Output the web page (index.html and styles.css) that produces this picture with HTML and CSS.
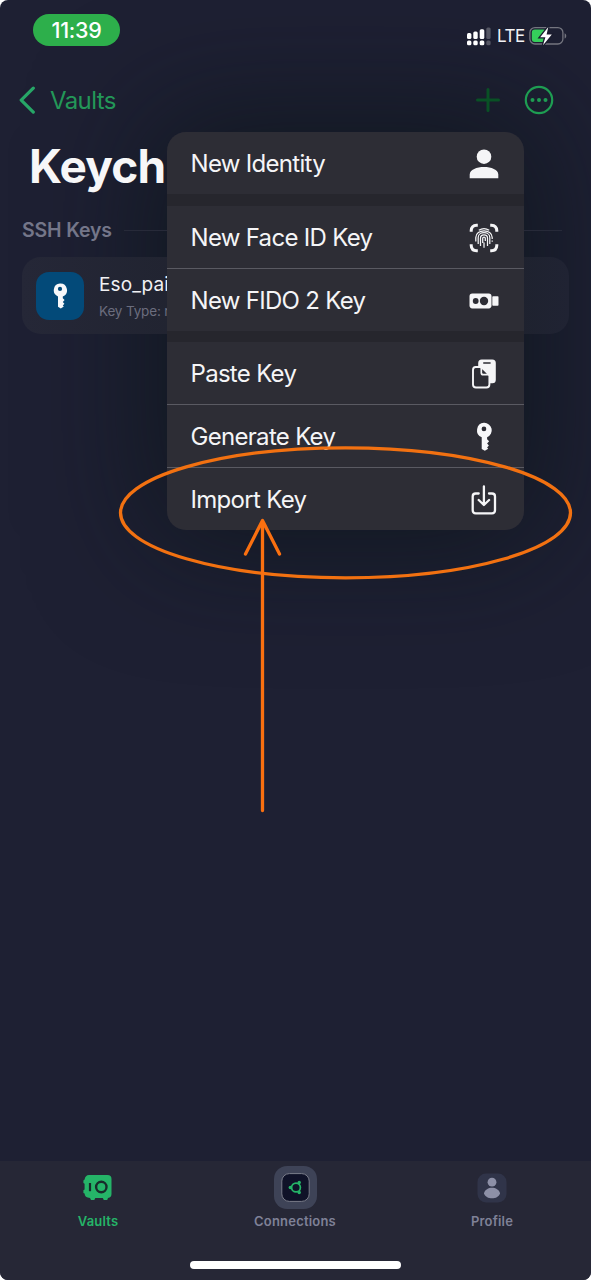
FILE: index.html
```
<!DOCTYPE html>
<html lang="en">
<head>
<meta charset="utf-8">
<title>Keychain</title>
<link rel="stylesheet" href="styles.css">
</head>
<body>
<div class="phone">
  <i class="menu-shadow"></i>
  <header class="status">
    <span class="clock">11:39</span>
    <div class="status-right">
      <svg class="signal" width="24" height="19" viewBox="0 0 24 19" fill="#fff">
        <rect x="0" y="6" width="4.4" height="6" rx="1.5"/><rect x="6.3" y="4.5" width="4.4" height="7.5" rx="1.5"/><rect x="12.7" y="2.2" width="4.6" height="9.8" rx="1.5"/><rect x="19.3" y="0.5" width="4.3" height="11.5" rx="1.5" opacity=".25"/>
        <rect x="0" y="13.6" width="4.4" height="4.6" rx="1.5"/><rect x="6.3" y="13.6" width="4.4" height="4.6" rx="1.5"/><rect x="12.7" y="13.6" width="4.6" height="4.6" rx="1.5"/><rect x="19.3" y="13.6" width="4.3" height="4.6" rx="1.5" opacity=".25"/>
      </svg>
      <span class="lte">LTE</span>
      <svg class="battery" width="39" height="20" viewBox="0 0 39 20">
        <rect x=".9" y="1.6" width="33" height="16.4" rx="5" fill="none" stroke="#74757f" stroke-width="1.3"/>
        <path d="M35.6 7.2c2.2.7 2.2 4.600 0 5.400z" fill="#74757f"/>
        <rect x="2.800" y="3.500" width="14.500" height="12.600" rx="3" fill="#35ce5b"/>
        <path d="M19.300 1L11.200 11.200h5.200l-2.400 8L22.800 8.600h-5.200z" fill="#fff" stroke="#1b1d2f" stroke-width="2.600" paint-order="stroke"/>
      </svg>
    </div>
  </header>
  <nav class="navbar">
    <svg width="18" height="28" viewBox="0 0 18 28" fill="none" stroke="#27a667" stroke-width="3.200" stroke-linecap="round" stroke-linejoin="round"><path d="M14.300 2.200L2.200 14.100l12.100 12"/></svg>
    <span class="back">Vaults</span>
    <svg class="plus" width="24" height="24" viewBox="0 0 24 24" stroke="#095125" stroke-width="3" stroke-linecap="round"><path d="M12 1.500v21M1.500 12h21"/></svg>
    <svg class="more" width="30" height="30" viewBox="0 0 30 30"><circle cx="15" cy="15" r="13.200" fill="none" stroke="#1e9d52" stroke-width="2.200"/><g fill="#1e9d52"><circle cx="8.500" cy="15" r="2"/><circle cx="15" cy="15" r="2"/><circle cx="21.500" cy="15" r="2"/></g></svg>
  </nav>
  <main class="content">
    <h1 class="title">Keych</h1>
    <div class="section"><h2 class="section-name">SSH Keys</h2><i class="rule"></i></div>
    <div class="card">
      <div class="tile"><svg width="16" height="26" viewBox="0 0 16 26"><use href="#key"/></svg></div>
      <div class="info"><span class="name">Eso_pai</span><span class="kind">Key Type: r</span></div>
    </div>
  </main>
  <footer class="tabs">
    <div class="tab tab-on">
      <div class="tab-icon">
        <svg width="30" height="28" viewBox="0 0 30 28"><path d="M6 1h18.500q4 0 4 4v15q0 3.600-3.500 4l-.8 2h-3.400l-1-2H12.300l-1 2H8l-1-2Q1.600 23.500 1.600 19.500l-1.200-.6v-2.600l1.200-.8V9.700L.4 9V6.400L1.600 5.600Q2.300 1 6 1z" fill="#25b468"/><path d="M7 9v8.200" stroke="#182c2b" stroke-width="2.200"/><circle cx="18.300" cy="13" r="5.200" fill="none" stroke="#182c2b" stroke-width="2.400"/></svg>
      </div>
      <span>Vaults</span>
    </div>
    <div class="tab">
      <div class="tab-icon">
        <svg width="43" height="43" viewBox="0 0 43 43"><rect width="43" height="43" rx="13" fill="#3e4357"/><rect x="7.800" y="7.600" width="27.400" height="27.800" rx="7.500" fill="#0f1228" stroke="#7a7d8a" stroke-width="1"/><circle cx="22" cy="21.500" r="4.400" fill="none" stroke="#25b468" stroke-width="1.700"/><g fill="#25b468"><circle cx="16.300" cy="21.500" r="1.700"/><circle cx="25.200" cy="16.500" r="1.700"/><circle cx="25.200" cy="26.500" r="1.700"/></g></svg>
      </div>
      <span>Connections</span>
    </div>
    <div class="tab">
      <div class="tab-icon">
        <svg width="30" height="30" viewBox="0 0 30 30"><rect x=".5" y=".5" width="29" height="29" rx="8.500" fill="#303449"/><circle cx="15" cy="9.200" r="4.400" fill="#8d90a7"/><path d="M7 20.200c1.700-7.400 14.300-7.400 16 0-1.500 6.800-14.500 6.800-16 0z" fill="#8d90a7"/></svg>
      </div>
      <span>Profile</span>
    </div>
    <i class="home"></i>
  </footer>

  <div class="menu">
    <div class="item"><span>New Identity</span>
      <svg width="30" height="30" viewBox="0 0 30 30" fill="#f5f5f7"><circle cx="15" cy="7.700" r="7.300"/><path d="M.7 29.200v-3.700C.7 15.500 29.300 15.500 29.300 25.500v3.700z"/></svg></div>
    <div class="gap gap-a"></div>
    <div class="item item-line"><span>New Face ID Key</span>
      <svg width="30" height="30" viewBox="0 0 30 30" fill="none" stroke="#f5f5f7"><path d="M2.200 8.800V7.600Q2.400 2.500 7.600 2.200h1.200M21.200 2.200h1.200q5.200.3 5.400 5.400v1.200M27.800 21.200v1.200q-.2 5.200-5.400 5.400h-1.200M8.800 27.800H7.600Q2.400 27.600 2.200 22.400v-1.200" stroke-width="3"/><path d="M9.800 7.200Q15 4 20.200 7.200M6.800 18.500v-4c0-9 16.400-9 16.400 0v1.500M9.200 21v-6.500c0-6.400 11.600-6.400 11.600 0V21M11.500 23v-8c0-4.200 7 -4.200 7 0v8M13.700 20v-4.700c0-1.500 2.600-1.500 2.600 0V18M15 19.500v5.200M23.200 17.500v1.200" stroke-width="1.250"/></svg></div>
    <div class="item item-short"><span>New FIDO 2 Key</span>
      <svg width="30" height="30" viewBox="0 0 30 30" fill="#f5f5f7"><rect x=".5" y="7.600" width="22" height="14.800" rx="2.800"/><rect x="23.300" y="10.200" width="6.200" height="9.600" rx=".8"/><circle cx="6.700" cy="15" r="2.900" fill="#2d2d35"/><circle cx="15" cy="15" r="4.200" fill="#2d2d35"/></svg></div>
    <div class="gap gap-b"></div>
    <div class="item item-line"><span>Paste Key</span>
      <svg width="30" height="30" viewBox="0 0 30 30"><rect x="9.200" y=".6" width="17.600" height="23.600" rx="3.500" fill="#f5f5f7"/><path d="M14.800 4h6.200" stroke="#2d2d35" stroke-width="1.600" stroke-linecap="round"/><path d="M6.700 8h5l8.700 8.200v9.300q0 3-3 3H7q-3 0-3-3V11q0-3 2.700-3z" fill="#2d2d35" stroke="#f5f5f7" stroke-width="1.900"/><path d="M12.300 8.200v5.500q0 2 2 2h5.700z" fill="#2d2d35" stroke="#f5f5f7" stroke-width="1.700"/></svg></div>
    <div class="item item-line"><span>Generate Key</span>
      <svg width="30" height="30" viewBox="0 0 30 30"><g transform="translate(6 .3) scale(1.120)"><path id="key" fill="#f8f8fa" fill-rule="evenodd" d="M8 .5a6.700 6.700 0 0 1 2.800 12.900v1.800l1.800 1.700-1.800 2 1.600 1.900-1.600 1.800 1 1L8.800 25.500 6 23.800V13.400A6.700 6.700 0 0 1 8 .5zM8 3.800a2.100 2.100 0 1 0 0 4.200 2.100 2.100 0 0 0 0-4.200z"/></g></svg></div>
    <div class="item"><span>Import Key</span>
      <svg width="30" height="30" viewBox="0 0 30 30" fill="none" stroke="#f5f5f7" stroke-width="2.300" stroke-linecap="round" stroke-linejoin="round"><path d="M9.700 8.500H6.700q-3 0-3 3v13.800q0 3 3 3h16.300q3 0 3-3V11.500q0-3-3-3H20M14.900 1.500v18M9.700 15l5.200 5 5.200-5"/></svg></div>
  </div>

  <svg class="marks" width="591" height="1280" viewBox="0 0 591 1280" fill="none" stroke="#f27111" stroke-width="3.300" stroke-linecap="round" stroke-linejoin="round"><ellipse cx="345.500" cy="512.800" rx="225" ry="65"/><path d="M262.500 810.500V521M245.500 554l17-33.500 17 33.500" stroke="#fa7010"/></svg>
</div>
</body>
</html>
```
FILE: styles.css
```
* { box-sizing: border-box; }
body { margin: 0; background: #fff; font-family: Inter, "Liberation Sans", sans-serif; }
svg { display: block; flex: none; }
.phone { position: relative; z-index: 0; width: 591px; height: 1280px; border-radius: 8px; background: #1e2033; overflow: hidden; display: flex; flex-direction: column; }
.menu-shadow { position: absolute; z-index: -1; left: 167px; top: 132px; width: 357px; height: 398px; border-radius: 19px; box-shadow: 0 0 120px 15px rgba(8, 18, 20, .6); }
.status { height: 72px; padding: 14px 23px 0 33px; display: flex; justify-content: space-between; align-items: flex-start; }
.clock { width: 87px; height: 32px; border-radius: 16px; background: #2daf4b; color: #fff; font-size: 21.500px; line-height: 33px; font-weight: 500; text-align: center; letter-spacing: -.3px; }
.status-right { display: flex; align-items: center; height: 20px; margin-top: 12px; }
.lte { color: #f2f2f5; font-size: 17px; line-height: 20px; margin-left: 6px; letter-spacing: -.5px; width: 32px; }
.navbar { height: 56px; padding: 0 37px 0 19px; display: flex; align-items: center; }
.back { margin-left: 13px; color: #239758; font-size: 24px; line-height: 30px; letter-spacing: -.6px; padding-top: 1px; }
.plus { margin-left: auto; }
.more { margin-left: 24px; }
.content { flex: 1; padding: 10px 22px 0; }
.title { margin: 0 0 0 7px; height: 58px; line-height: 56px; color: #f7f7f8; font-size: 46px; letter-spacing: -.8px; font-weight: 700; }
.section { display: flex; align-items: center; height: 40px; margin-top: 14px; gap: 14px; padding-right: 7px; }
.section-name { margin: 0; width: 88px; white-space: nowrap; color: #747689; font-size: 19.500px; line-height: 26px; font-weight: 600; letter-spacing: -.15px; }
.rule { flex: 1; height: 1px; background: #272a39; }
.card { height: 77px; margin-top: 7px; border-radius: 19px; background: linear-gradient(90deg, #252737, #20232f 35%, #1e222e 90%, #202333); display: flex; align-items: center; padding-left: 14px; gap: 15px; }
.tile { width: 48px; height: 48px; border-radius: 13px; background: #034a79; display: flex; align-items: center; justify-content: center; }
.info { display: flex; flex-direction: column; gap: 5px; }
.name { color: #f1f1f4; font-size: 19px; line-height: 25px; letter-spacing: .1px; }
.kind { color: #6b6d7e; font-size: 13.500px; line-height: 18px; letter-spacing: -.15px; }
.menu { position: absolute; left: 167px; top: 132px; width: 357px; height: 398px; border-radius: 19px; overflow: hidden; background: #2d2d35; }
.item { height: 62px; padding: 2px 25px 0 23.500px; display: flex; align-items: center; justify-content: space-between; color: #f5f5f7; font-size: 24px; line-height: 30px; letter-spacing: -.7px; }
.item span { letter-spacing: -.7px; }
.item-line { height: 63px; border-bottom: 1px solid #5a5a62; }
.gap { background: #26262d; }
.gap-a { height: 12px; }
.gap-b { height: 11px; }
.item-short { letter-spacing: -.6px; }
.marks { position: absolute; left: 0; top: 0; }
.tabs { height: 119px; background: #262736; display: grid; grid-template-columns: repeat(3, 197px); grid-template-rows: 88px 8px; row-gap: 12px; align-content: start; }
.tab { display: flex; flex-direction: column; align-items: center; color: #7f8197; font-size: 13px; font-weight: 600; line-height: 18px; letter-spacing: .2px; padding: 5px 1px 0 0; }
.tab-on { color: #25b468; }
.tab-icon { height: 43px; display: flex; align-items: center; margin-bottom: 3px; }
.home { grid-column: 1 / 4; justify-self: center; width: 211px; height: 8px; border-radius: 4px; background: #fff; }
```
